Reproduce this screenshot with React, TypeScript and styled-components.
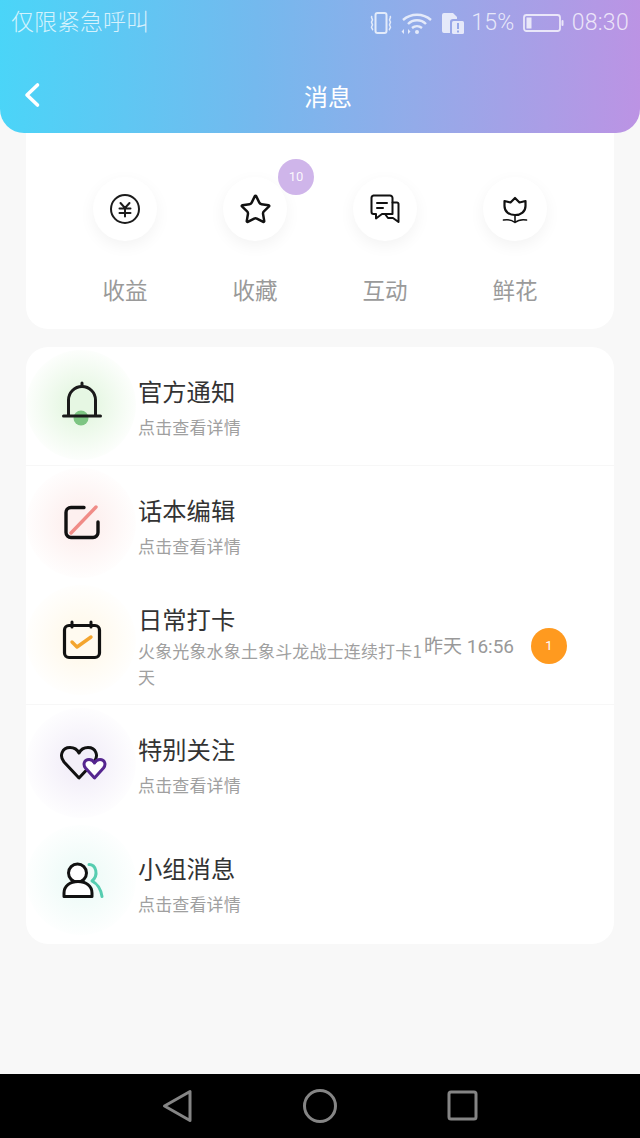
import React from 'react';
import styled, { createGlobalStyle } from 'styled-components';
import { Star } from 'lucide-react';

const Global = createGlobalStyle`
  html, body { margin: 0; padding: 0; background: #f8f8f8; }
  body { font-family: "Noto Sans CJK SC", "Noto Sans", sans-serif; }
`;

const Page = styled.div`
  width: 640px; height: 1138px; display: flex; flex-direction: column; overflow: hidden; background: #f8f8f8;
`;
const Header = styled.header`
  position: relative; z-index: 2; height: 133px; flex: none;
  background: linear-gradient(92deg, #4ad5f8 0%, #74b9ee 40%, #93abe9 65%, #bc93e4 100%);
  border-radius: 0 0 24px 24px;
`;
const StatusBar = styled.div`
  height: 45px; padding: 0 11px; display: flex; align-items: center; justify-content: space-between;
  color: rgba(255,255,255,.75);
`;
const Carrier = styled.span`
  font-size: 23px; line-height: 41px; padding-bottom: 4px; font-weight: 300;
`;
const StatusGroup = styled.div`
  display: flex; align-items: center; gap: 8px;
`;
const StatusText = styled.span<{ $pull?: boolean }>`
  font-family: Roboto, sans-serif; font-size: 23px; line-height: 45px; font-weight: 300; letter-spacing: .3px;
  margin-left: ${p => (p.$pull ? -2 : 0)}px;
`;
const TitleBar = styled.div`
  position: relative; height: 88px; display: flex; align-items: center; justify-content: center; padding: 14px 0 0 16px; box-sizing: border-box;
`;
const Title = styled.h1`
  margin: 0; font-size: 24px; line-height: 32px; font-weight: 400; color: #fff;
`;
const Back = styled.svg`
  position: absolute; left: 21px; top: 36px;
`;
const Main = styled.main`
  flex: 1; padding: 0 26px; display: flex; flex-direction: column; gap: 18px; min-height: 0;
`;
const TopCard = styled.section`
  margin-top: -20px; background: #fff; border-radius: 0 0 22px 22px; padding: 64px 34px 25px;
  display: grid; grid-template-columns: repeat(4, 130px);
`;
const Shortcut = styled.div`
  display: flex; flex-direction: column; align-items: center; gap: 33px;
`;
const Round = styled.div`
  position: relative; width: 64px; height: 64px; border-radius: 50%; background: #fff;
  box-shadow: 0 5px 16px rgba(0,0,0,.05); display: flex; align-items: center; justify-content: center; color: #1c1c1c;
`;
const CountBadge = styled.span`
  position: absolute; left: 55px; top: -18px; width: 36px; height: 36px; border-radius: 50%;
  background: #cfb5ea; color: rgba(255,255,255,.9); font: 400 13px/36px Roboto, sans-serif; text-align: center;
`;
const ShortLabel = styled.span`
  font-size: 22.500px; line-height: 30px; color: #9a9a9a;
`;
const ListCard = styled.section`
  background: #fff; border-radius: 22px; overflow: hidden;
`;
const Row = styled.div<{ $divided?: boolean }>`
  height: 119.4px; box-sizing: border-box; display: flex; align-items: center; gap: 1px;
  box-shadow: ${p => (p.$divided ? 'inset 0 -1px 0 #f7f7f7' : 'none')};
`;
const Glow = styled.div<{ $color: string; $up: number }>`
  width: 110px; height: 110px; flex: none; border-radius: 50%; margin: ${p => -p.$up * 2}px 1px 0 0;
  background: radial-gradient(circle closest-side, ${p => p.$color} 0%, ${p => p.$color} 25%, ${p => p.$color}66 75%, ${p => p.$color}1c 100%);
  display: flex; align-items: center; justify-content: center;
`;
const RowText = styled.div<{ $tight?: boolean }>`
  width: 285px; flex: none; display: flex; flex-direction: column;
  gap: ${p => (p.$tight ? 3 : 7)}px; margin-top: ${p => (p.$tight ? 3 : 1)}px;
`;
const RowTitle = styled.span`
  font-size: 24.300px; line-height: 32px; color: #333;
`;
const RowSub = styled.span`
  font-size: 17px; letter-spacing: .15px; line-height: 26px; color: #a0a0a0;
`;
const Time = styled.span`
  font-size: 19px; line-height: 26px; color: #999; font-family: Roboto, "Noto Sans CJK SC", sans-serif; width: 106px; flex: none; white-space: nowrap; margin-top: 4px;
`;
const Dot = styled.span`
  width: 36px; height: 36px; border-radius: 50%; background: #ff9a1f; color: #fff; font: 400 13px/36px Roboto, sans-serif; text-align: center; flex: none; margin-top: 2px;
`;
const Nav = styled.nav`
  height: 64px; flex: none; background: #000; display: flex; align-items: center; justify-content: center;
`;
const NavSlot = styled.div`
  width: 142px; display: flex; justify-content: center; align-items: center; padding-bottom: 1px;
`;

const Vibrate = () => (
  <svg width="24" height="24" viewBox="0 0 24 24" fill="none" stroke="currentColor">
    <rect x="6.5" y="2" width="11" height="20" rx="2" strokeWidth="2" />
    <path d="M3 5c-2 2 2 3 0 5s2 3 0 5 2 3 0 4M21 5c2 2-2 3 0 5s-2 3 0 5-2 3 0 4" strokeWidth="1.6" />
  </svg>
);
const Wifi = () => (
  <svg width="32" height="24" viewBox="0 0 32 24" fill="none" stroke="currentColor" strokeWidth="2.4">
    <path d="M2 9c8-7 20-7 28 0M7 13c5-5 13-5 18 0M11 17c3-2.500 7-2.500 10 0" />
    <circle cx="16" cy="21" r="2" fill="currentColor" stroke="none" />
    <path d="M3 18l-2.500 2.500 2.500 2.500zM7 18l2.500 2.500-2.500 2.500z" fill="currentColor" stroke="none" />
  </svg>
);
const Sim = () => (
  <svg width="24" height="24" viewBox="0 0 24 24" fill="none">
    <path d="M1 4a2 2 0 0 1 2-2h9l4 4v2h-4a3 3 0 0 0-3 3v11H3a2 2 0 0 1-2-2z" fill="currentColor" />
    <rect x="11" y="10" width="12" height="13" rx="1.500" fill="currentColor" />
    <path d="M17 12v6M17 19.500v2" stroke="#97a9e9" strokeWidth="2" />
  </svg>
);
const Battery = () => (
  <svg width="41" height="20" viewBox="0 0 41 20" fill="none">
    <rect x="1" y="2" width="36" height="16" rx="2.500" stroke="currentColor" strokeWidth="1.800" />
    <rect x="3.500" y="4.500" width="5" height="11" fill="currentColor" />
    <rect x="38.500" y="7" width="2" height="6" rx="1" fill="currentColor" />
  </svg>
);

const Yen = () => (
  <svg width="32" height="32" viewBox="0 0 32 32" fill="none" stroke="currentColor" strokeWidth="2">
    <circle cx="16" cy="16" r="14" />
    <path d="M11.500 10l4.500 5 4.500-5M10.500 15.500h11M10.500 20h11M16 15v8.500" strokeLinecap="round" />
  </svg>
);
const Chat = () => (
  <svg width="32" height="32" viewBox="0 0 32 32" fill="none" stroke="#111" strokeWidth="2" strokeLinejoin="round" strokeLinecap="round">
    <path d="M4.500 2.500H21a2.500 2.500 0 0 1 2.500 2.500v16H13l-6 4.500V21H4.500a2 2 0 0 1-2-2V5a2.500 2.500 0 0 1 2-2.500z" />
    <path d="M23.500 9.500H28a1.500 1.500 0 0 1 1.500 1.500v18L24 25h-5l-3-4" />
    <path d="M8 10h10M8 15h6" />
  </svg>
);
const Flower = () => (
  <svg width="32" height="32" viewBox="0 0 32 32" fill="none" stroke="#111" strokeWidth="2.200" strokeLinejoin="round" strokeLinecap="round">
    <path d="M5.500 8l6 1.500L16 5l4.500 4.500 6-1.500V13c0 5.500-4.500 9-10.500 9S5.500 18.500 5.500 13z" />
    <path d="M16 23v6M4.500 27c4-.7 8.500 0 11.500 2.500C19 27 23.500 26.300 27.500 27" strokeWidth="1.600" />
  </svg>
);

const Bell = () => (
  <svg width="60" height="60" viewBox="0 0 60 60" fill="none">
    <circle cx="30" cy="43" r="7.500" fill="#7dc582" />
    <path d="M17.500 41V25a13.500 13.500 0 0 1 27 0v16" stroke="#1a1a1a" strokeWidth="3" />
    <path d="M12.500 41h37" stroke="#1a1a1a" strokeWidth="3" strokeLinecap="round" />
    <path d="M31 11V8" stroke="#1a1a1a" strokeWidth="3" strokeLinecap="round" />
  </svg>
);
const EditIcon = () => (
  <svg width="60" height="60" viewBox="0 0 60 60" fill="none" strokeLinecap="round">
    <path d="M33 14.500H20a5 5 0 0 0-5 5v20a5 5 0 0 0 5 5h22a5 5 0 0 0 5-5V29" stroke="#111" strokeWidth="3.400" />
    <path d="M20 40l25-26" stroke="#f08c87" strokeWidth="3.400" />
  </svg>
);
const Calendar = () => (
  <svg width="60" height="60" viewBox="0 0 60 60" fill="none" strokeLinecap="round" strokeLinejoin="round">
    <rect x="13.500" y="15.500" width="35" height="32" rx="4.500" fill="#fffaf0" stroke="#111" strokeWidth="3.200" />
    <path d="M21 12v5M40 12v5" stroke="#111" strokeWidth="3" />
    <path d="M21 32l5 5 14-10" stroke="#f4a52f" strokeWidth="3.400" />
  </svg>
);
const Hearts = () => (
  <svg width="60" height="60" viewBox="0 0 60 60" fill="none" strokeLinejoin="round">
    <path d="M28 45L13 29c-5-6-2-14.500 6-14.500 4 0 7.500 2.500 9 5.500 1.500-3 5-5.500 9-5.500 8 0 11 8.500 6 14.500z" stroke="#111" strokeWidth="3" />
    <path d="M43.500 45l-9-10c-3-4-1-8.500 3.500-8.500 2.500 0 4.500 1.500 5.500 3.500 1-2 3-3.500 5.500-3.500 4.500 0 6.500 4.500 3.500 8.500z" fill="#fff" stroke="#55268f" strokeWidth="3" />
  </svg>
);
const Group = () => (
  <svg width="60" height="60" viewBox="0 0 60 60" fill="none" strokeLinejoin="round" strokeLinecap="round">
    <path d="M38 14.500c7 0 10 10.500 3 16.500 6 3 9 9 10 15.500" stroke="#56cdb0" strokeWidth="3" />
    <circle cx="26.500" cy="23" r="9" fill="#fff" stroke="#111" strokeWidth="3" />
    <path d="M13 46.500V43c0-7 6-11.500 14-11.500S41 36 41 43v3.500z" fill="#fff" stroke="#111" strokeWidth="3" />
  </svg>
);

const DETAIL = '点击查看详情';

export default function App() {
  return (
    <Page>
      <Global />
      <Header>
        <StatusBar>
          <Carrier>仅限紧急呼叫</Carrier>
          <StatusGroup>
            <Vibrate />
            <Wifi />
            <Sim />
            <StatusText $pull>15%</StatusText>
            <Battery />
            <StatusText>08:30</StatusText>
          </StatusGroup>
        </StatusBar>
        <TitleBar>
          <Back width="24" height="28" viewBox="0 0 24 28" fill="none">
            <path d="M16.500 4L6 14l10.500 10" stroke="#fff" strokeWidth="3.600" strokeLinecap="round" strokeLinejoin="round" />
          </Back>
          <Title>消息</Title>
        </TitleBar>
      </Header>
      <Main>
        <TopCard>
          <Shortcut>
            <Round><Yen /></Round>
            <ShortLabel>收益</ShortLabel>
          </Shortcut>
          <Shortcut>
            <Round>
              <Star size={33} strokeWidth={1.8} color="#111" />
              <CountBadge>10</CountBadge>
            </Round>
            <ShortLabel>收藏</ShortLabel>
          </Shortcut>
          <Shortcut>
            <Round><Chat /></Round>
            <ShortLabel>互动</ShortLabel>
          </Shortcut>
          <Shortcut>
            <Round><Flower /></Round>
            <ShortLabel>鲜花</ShortLabel>
          </Shortcut>
        </TopCard>
        <ListCard>
          <Row $divided>
            <Glow $color="#e6f7e3" $up={2}><Bell /></Glow>
            <RowText>
              <RowTitle>官方通知</RowTitle>
              <RowSub>{DETAIL}</RowSub>
            </RowText>
          </Row>
          <Row>
            <Glow $color="#fdf0ef" $up={3}><EditIcon /></Glow>
            <RowText>
              <RowTitle>话本编辑</RowTitle>
              <RowSub>{DETAIL}</RowSub>
            </RowText>
          </Row>
          <Row $divided>
            <Glow $color="#fff9ec" $up={5}><Calendar /></Glow>
            <RowText $tight>
              <RowTitle>日常打卡</RowTitle>
              <RowSub>火象光象水象土象斗龙战士连续打卡1天</RowSub>
            </RowText>
            <Time>昨天 16:56</Time>
            <Dot>1</Dot>
          </Row>
          <Row>
            <Glow $color="#f3eff9" $up={2}><Hearts /></Glow>
            <RowText>
              <RowTitle>特别关注</RowTitle>
              <RowSub>{DETAIL}</RowSub>
            </RowText>
          </Row>
          <Row>
            <Glow $color="#effbf8" $up={4}><Group /></Glow>
            <RowText>
              <RowTitle>小组消息</RowTitle>
              <RowSub>{DETAIL}</RowSub>
            </RowText>
          </Row>
        </ListCard>
      </Main>
      <Nav>
        <NavSlot>
          <svg width="34" height="36" viewBox="0 0 34 36" fill="none">
            <path d="M29 3.500v29L3.500 18z" stroke="#858585" strokeWidth="3" strokeLinejoin="round" />
          </svg>
        </NavSlot>
        <NavSlot>
          <svg width="36" height="36" viewBox="0 0 36 36" fill="none">
            <circle cx="18" cy="18" r="15.500" stroke="#858585" strokeWidth="3" />
          </svg>
        </NavSlot>
        <NavSlot>
          <svg width="32" height="32" viewBox="0 0 32 32" fill="none">
            <rect x="3" y="2" width="27" height="27" rx="2" stroke="#858585" strokeWidth="3" />
          </svg>
        </NavSlot>
      </Nav>
    </Page>
  );
}
